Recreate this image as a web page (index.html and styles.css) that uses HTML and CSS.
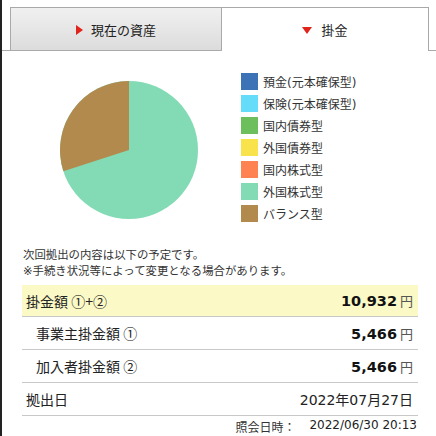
FILE: index.html
```html
<html lang="ja">

<head>
    <meta charset="UTF-8">
    <meta name="viewport" content="width=device-width, initial-scale=1.0">
    <title>掛金</title>

    <link rel="stylesheet" href="styles.css">
</head>

<body>
    <div class="page">
        <div class="tabs">
            <div class="tab">
                <svg class="arrow" width="7" height="10" viewBox="0 0 7 10"><polygon points="0,0 7,5 0,10" fill="#e0231b"/></svg>
                <span>現在の資産</span>
            </div>
            <div class="tab active">
                <svg class="arrow" width="10" height="7" viewBox="0 0 10 7"><polygon points="0,0 10,0 5,7" fill="#e0231b"/></svg>
                <span>掛金</span>
            </div>
        </div>

        <div class="content">
            <div class="chart">
                <svg class="pie" width="138" height="138" viewBox="0 0 138 138">
                    <circle cx="69" cy="69" r="69" fill="#82dbb4"/>
                    <path d="M69,69 L69,0 A69,69 0 0,0 3.4,90.3 Z" fill="#b38a4e"/>
                </svg>
                <ul class="legend">
                    <li><i style="background:#3b73b6"></i>預金(元本確保型)</li>
                    <li><i style="background:#66dcfb"></i>保険(元本確保型)</li>
                    <li><i style="background:#6cbf5c"></i>国内債券型</li>
                    <li><i style="background:#f9e34d"></i>外国債券型</li>
                    <li><i style="background:#ff8352"></i>国内株式型</li>
                    <li><i style="background:#82dbb4"></i>外国株式型</li>
                    <li><i style="background:#b38a4e"></i>バランス型</li>
                </ul>
            </div>

            <p class="note">次回拠出の内容は以下の予定です。<br>※手続き状況等によって変更となる場合があります。</p>

            <div class="rows">
                <div class="row total">
                    <div class="label">掛金額 ①+②</div>
                    <div class="value"><b>10,932</b><span class="yen">円</span></div>
                </div>
                <div class="row sub">
                    <div class="label">事業主掛金額 ①</div>
                    <div class="value"><b>5,466</b><span class="yen">円</span></div>
                </div>
                <div class="row sub">
                    <div class="label">加入者掛金額 ②</div>
                    <div class="value"><b>5,466</b><span class="yen">円</span></div>
                </div>
                <div class="row">
                    <div class="label">拠出日</div>
                    <div class="value date">2022年07月27日</div>
                </div>
            </div>

            <div class="stamp">
                <span>照会日時：</span>
                <span class="stamp-time">2022/06/30 20:13</span>
            </div>
        </div>
    </div>
</body>

</html>
```

FILE: styles.css
```css
* {
    box-sizing: border-box;
    margin: 0;
    padding: 0;
}

body {
    font-family: "DejaVu Sans", "Noto Sans CJK JP", sans-serif;
    color: #222;
    background: white;
}

.page {
    border-left: 2px solid #222;
    min-height: 436px;
}

.tabs {
    display: flex;
    height: 51px;
    padding: 7px 7px 0 8px;
    border-bottom: 1px solid #aaa;
}

.tab {
    width: 212px;
    height: 43px;
    display: flex;
    align-items: center;
    justify-content: center;
    gap: 8px;
    font-size: 13px;
    border: 1px solid #a9a9a9;
    border-bottom: none;
    background: linear-gradient(#f0f0f0, #dcdcdc);
}

.tab.active {
    flex: 1;
    height: 44px;
    border-left: none;
    background: white;
    gap: 9px;
}

.tab .arrow {
    margin-top: 1px;
}

.content {
    padding: 0 18px 0 20px;
}

.chart {
    display: flex;
    align-items: flex-start;
    margin-top: 21px;
    height: 150px;
}

.pie {
    margin: 9px 0 0 38px;
}

.legend {
    list-style: none;
    margin-left: 43px;
}

.legend li {
    display: flex;
    align-items: center;
    gap: 5px;
    height: 22px;
    font-size: 12px;
    color: #333;
}

.legend li:first-child {
    margin-top: -2px;
}

.legend i {
    width: 17px;
    height: 17px;
}

.note {
    margin-top: 25px;
    padding-left: 1px;
    font-size: 11.4px;
    line-height: 16px;
    color: #333;
}

.rows {
    margin-top: 6px;
}

.row {
    display: flex;
    justify-content: space-between;
    align-items: center;
    height: 33px;
    padding: 0 5px 0 4px;
    border-bottom: 1px solid #c8c8c8;
    font-size: 14px;
}

.row .label {
    font-family: "Noto Sans CJK JP", "DejaVu Sans", sans-serif;
}

.row.total {
    height: 32px;
    background: #fbf9c6;
}

.row.sub .label {
    padding-left: 10px;
}

.value b {
    font-size: 14.5px;
    color: #111;
}

.yen {
    margin-left: 3px;
    font-size: 13px;
    color: #555;
}

.value.date {
    font-size: 14px;
}

.stamp {
    display: flex;
    justify-content: flex-end;
    gap: 14px;
    padding: 2px 1px 0 0;
    font-size: 12px;
    color: #333;
}

.stamp-time {
    color: #222;
}
```
